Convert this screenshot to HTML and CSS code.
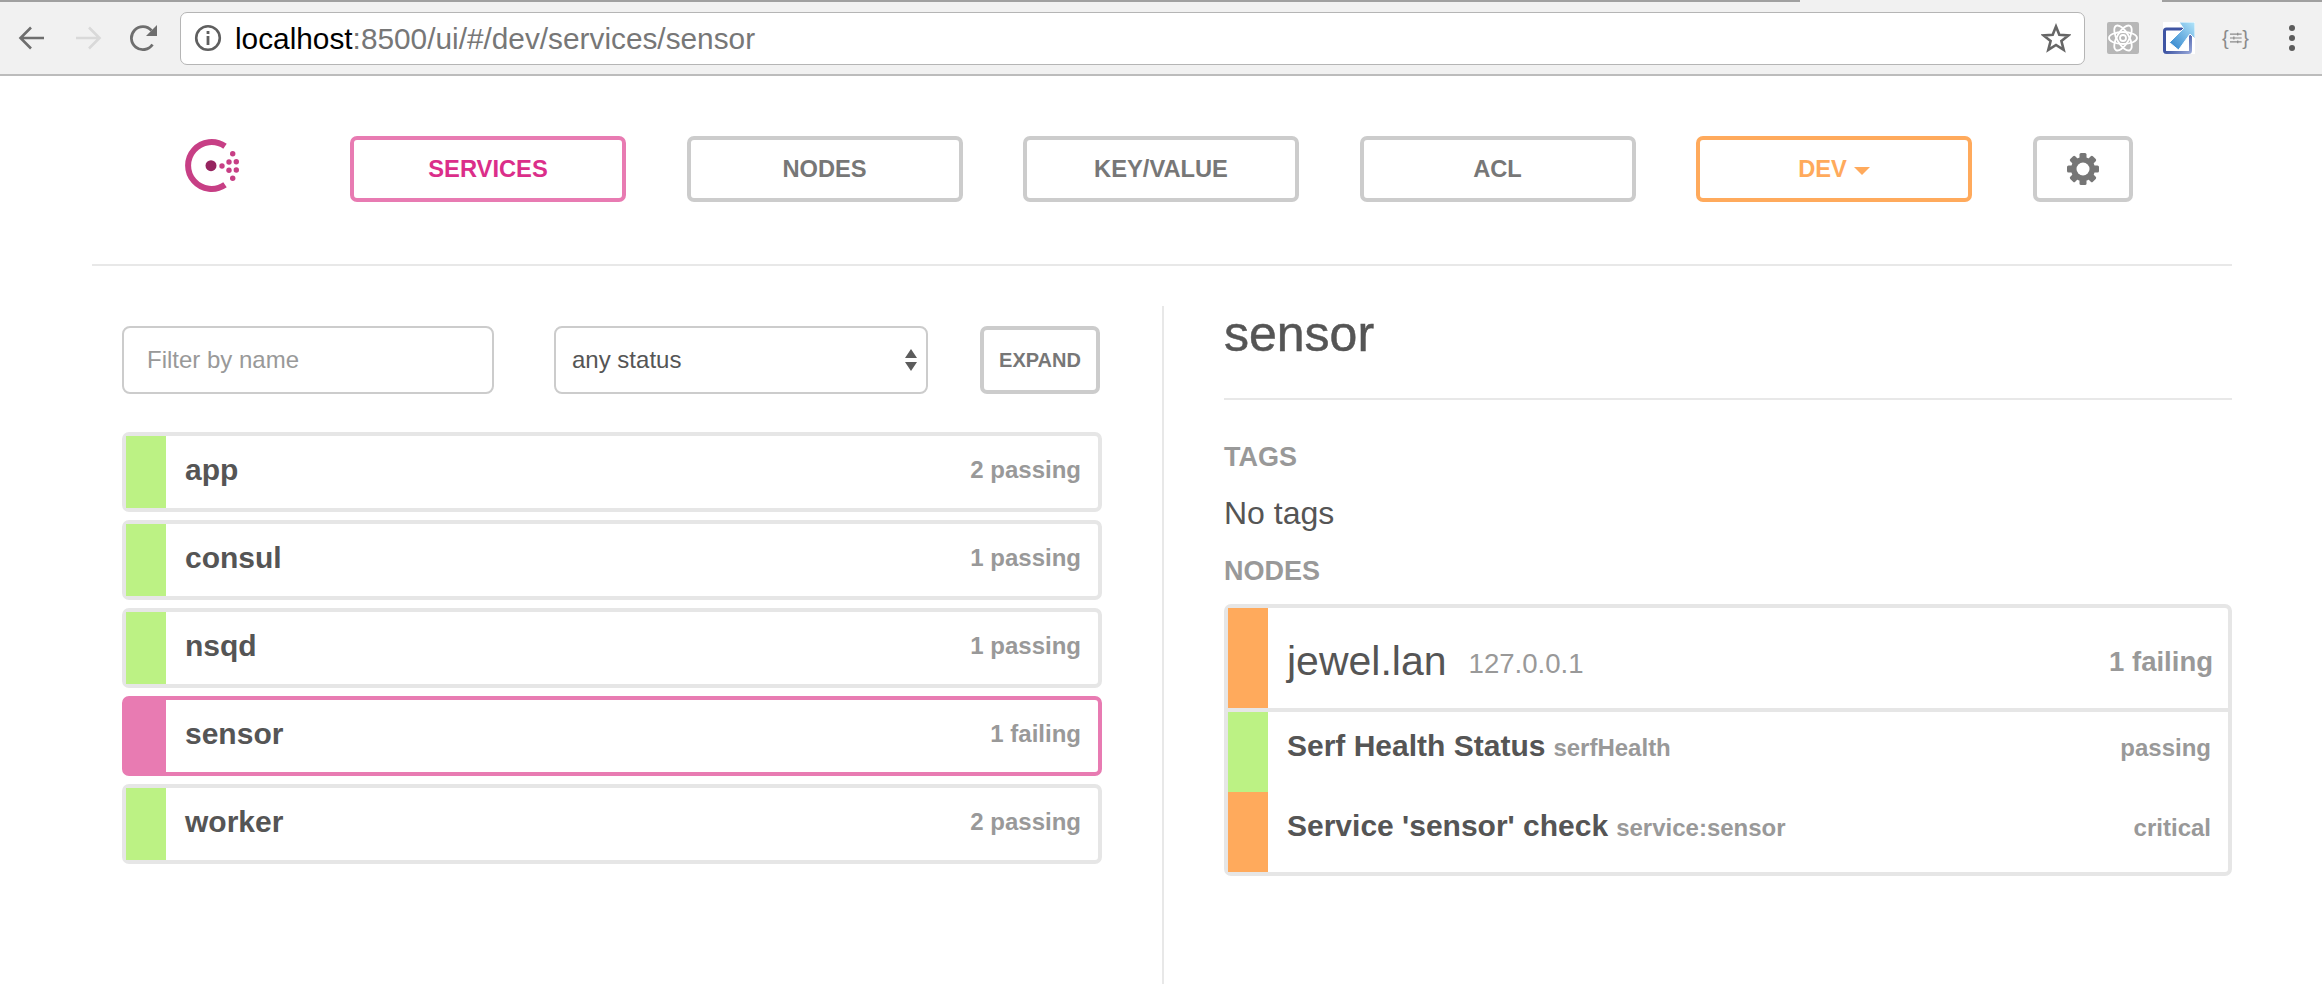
FILE: index.html
```html
<!DOCTYPE html>
<html>
<head>
    <title>Consul by HashiCorp</title>
    <link rel="stylesheet" href="styles.css">
</head>
<body>
    <div class="tab-strip">
        <div class="tab-line tab-left"></div>
        <div class="tab-line tab-right"></div>
    </div>
    <div class="browser-bar">
        <svg class="tool-icon" width="28" height="28" viewBox="0 0 28 28"><path d="M26 14H3M13 3.5 2.5 14 13 24.5" fill="none" stroke="#6e6e6e" stroke-width="2.6"/></svg>
        <svg class="tool-icon fwd" width="28" height="28" viewBox="0 0 28 28"><path d="M2 14h23M15 3.5 25.5 14 15 24.5" fill="none" stroke="#d9d9d9" stroke-width="2.6"/></svg>
        <svg class="tool-icon reload" width="28" height="28" viewBox="0 0 28 28"><path d="M22.5 20.5A11.5 11.5 0 1 1 21.5 6.5" fill="none" stroke="#6e6e6e" stroke-width="2.8"/><path d="M27 1v11H16z" fill="#6e6e6e"/></svg>
        <div class="url-box">
            <svg class="info-icon" width="28" height="28" viewBox="0 0 28 28"><circle cx="14" cy="14" r="11.8" fill="none" stroke="#5f5f5f" stroke-width="2.6"/><rect x="12.6" y="7" width="2.8" height="3" fill="#5f5f5f"/><rect x="12.6" y="12" width="2.8" height="9" fill="#5f5f5f"/></svg>
            <span class="url-text"><span class="url-host">localhost</span>:8500/ui/#/dev/services/sensor</span>
            <svg class="star-icon" width="30" height="30" viewBox="0 0 30 30"><path d="M15 3.5 18.3 11.8 27.4 12.4 20.4 18.1 22.7 26.9 15 22 7.3 26.9 9.6 18.1 2.6 12.4 11.7 11.8Z" fill="none" stroke="#666" stroke-width="2.6"/></svg>
        </div>
        <svg class="ext-icon" width="32" height="32" viewBox="0 0 32 32">
            <rect width="32" height="32" rx="2" fill="#b7b7b7"/>
            <g fill="none" stroke="#fff" stroke-width="1.8">
                <ellipse cx="16" cy="16" rx="14" ry="6"/>
                <ellipse cx="16" cy="16" rx="14" ry="6" transform="rotate(60 16 16)"/>
                <ellipse cx="16" cy="16" rx="14" ry="6" transform="rotate(120 16 16)"/>
                <circle cx="16" cy="16" r="3"/>
            </g>
        </svg>
        <svg class="ext-icon ext-blue" width="32" height="32" viewBox="0 0 32 32">
            <defs>
                <linearGradient id="frame-fill" x1="0" y1="0" x2="1" y2="1">
                    <stop offset="0.5" stop-color="#3f55a3"/>
                    <stop offset="1" stop-color="#93a3d6"/>
                </linearGradient>
                <linearGradient id="arrow-fill" x1="1" y1="0" x2="0" y2="1">
                    <stop offset="0" stop-color="#b4e6fa"/>
                    <stop offset="1" stop-color="#2a7fcb"/>
                </linearGradient>
            </defs>
            <rect width="32" height="32" fill="#fff"/>
            <rect x="1.5" y="7" width="26" height="23.5" rx="2" fill="#fff" stroke="url(#frame-fill)" stroke-width="3"/>
            <path d="M32 0V17L27 12 15.5 28 6.5 20.5 20.5 6.5 16 0Z" fill="url(#arrow-fill)" stroke="#fff" stroke-width="1"/>
        </svg>
        <span class="ext-text">{<svg width="14" height="14" viewBox="0 0 14 14"><path d="M1 3h12M1 7h12M1 11h12M9 1.5v3M5 5.5v3M9 9.5v3" fill="none" stroke="#8a8a8a" stroke-width="1.2"/></svg>}</span>
        <div class="menu-dots"><i></i><i></i><i></i></div>
    </div>

    <div class="page">
        <div class="top-nav">
            <svg class="logo" width="44" height="56" viewBox="0 0 44 56">
                <path d="M42 8.2A23.5 23.5 0 1 0 42 46.8" fill="none" stroke="#c73f85" stroke-width="6"/>
                <circle cx="28" cy="27.7" r="5.5" fill="#96245f"/>
                <g fill="#c73f85">
                    <circle cx="39" cy="28" r="2.7"/>
                    <circle cx="49.7" cy="15.7" r="2.7"/>
                    <circle cx="46" cy="24" r="2.7"/>
                    <circle cx="53.3" cy="23.7" r="2.7"/>
                    <circle cx="46" cy="32.3" r="2.7"/>
                    <circle cx="53.3" cy="32" r="2.7"/>
                    <circle cx="49.7" cy="40.3" r="2.7"/>
                </g>
            </svg>
            <a class="nav-btn active">SERVICES</a>
            <a class="nav-btn">NODES</a>
            <a class="nav-btn">KEY/VALUE</a>
            <a class="nav-btn">ACL</a>
            <a class="nav-btn dc">DEV <span class="caret"></span></a>
            <a class="nav-btn gear">
                <svg width="34" height="34" viewBox="0 0 34 34">
                    <g fill="#767676">
                        <rect x="13.5" y="1" width="7" height="32" rx="1.5"/>
                        <rect x="13.5" y="1" width="7" height="32" rx="1.5" transform="rotate(45 17 17)"/>
                        <rect x="13.5" y="1" width="7" height="32" rx="1.5" transform="rotate(90 17 17)"/>
                        <rect x="13.5" y="1" width="7" height="32" rx="1.5" transform="rotate(135 17 17)"/>
                        <circle cx="17" cy="17" r="12"/>
                    </g>
                    <circle cx="17" cy="17" r="6.5" fill="#fff"/>
                </svg>
            </a>
        </div>

        <div class="content">
            <div class="left-col">
                <div class="filters">
                    <input class="filter-input" type="text" placeholder="Filter by name">
                    <div class="status-select">
                        any status
                        <svg width="12" height="24" viewBox="0 0 12 24"><path d="M6 1 12 10H0zM6 23 0 14H12z" fill="#5c5c5c"/></svg>
                    </div>
                    <button class="expand-btn">EXPAND</button>
                </div>

                <div class="svc-row"><div class="band green"></div><h4>app</h4><span class="count">2 passing</span></div>
                <div class="svc-row"><div class="band green"></div><h4>consul</h4><span class="count">1 passing</span></div>
                <div class="svc-row"><div class="band green"></div><h4>nsqd</h4><span class="count">1 passing</span></div>
                <div class="svc-row selected"><div class="band pink"></div><h4>sensor</h4><span class="count">1 failing</span></div>
                <div class="svc-row"><div class="band green"></div><h4>worker</h4><span class="count">2 passing</span></div>
            </div>

            <div class="right-col">
                <h3 class="detail-title">sensor</h3>
                <h5 class="section-label tags-label">TAGS</h5>
                <p class="no-tags">No tags</p>
                <h5 class="section-label">NODES</h5>

                <div class="node-card">
                    <div class="node-head">
                        <div class="band orange"></div>
                        <span class="node-name">jewel.lan</span>
                        <span class="node-ip">127.0.0.1</span>
                        <span class="node-count">1 failing</span>
                    </div>
                    <div class="check-row">
                        <div class="band green"></div>
                        <span class="check-name">Serf Health Status</span>
                        <span class="check-id">serfHealth</span>
                        <span class="check-status">passing</span>
                    </div>
                    <div class="check-row">
                        <div class="band orange"></div>
                        <span class="check-name">Service 'sensor' check</span>
                        <span class="check-id">service:sensor</span>
                        <span class="check-status">critical</span>
                    </div>
                </div>
            </div>
        </div>
    </div>
</body>
</html>
```

FILE: styles.css
```css
* {
    box-sizing: border-box;
}

body {
    margin: 0;
    min-height: 100vh;
    display: flex;
    flex-direction: column;
    font-family: "Liberation Sans", Arial, sans-serif;
    color: #555;
    background: #fff;
    overflow: hidden;
}

/* browser toolbar */
.tab-strip {
    height: 2px;
    display: flex;
    justify-content: space-between;
    background: #f1f1f1;
}

.tab-line {
    background: #a0a0a0;
}

.tab-left {
    width: 1800px;
}

.tab-right {
    width: 160px;
}

.browser-bar {
    height: 74px;
    display: flex;
    align-items: center;
    padding: 0 0 0 18px;
    background: #f1f1f1;
    border-bottom: 2px solid #bcbcbc;
}

.tool-icon {
    flex: none;
    margin-right: 28px;
}

.tool-icon.reload {
    margin-right: 22px;
}

.url-box {
    width: 1905px;
    height: 53px;
    display: flex;
    align-items: center;
    padding: 0 13px 0 13px;
    background: #fff;
    border: 1px solid #b5b5b5;
    border-radius: 7px;
}

.url-text {
    margin-left: 13px;
    padding-top: 1px;
    font-size: 29.8px;
    color: #777;
    flex: 1;
}

.url-host {
    color: #000;
}

.ext-icon {
    flex: none;
    margin-left: 22px;
}

.ext-icon.ext-blue {
    margin-left: 24px;
}

.ext-text {
    margin-left: 27px;
    width: 27px;
    display: flex;
    align-items: center;
    justify-content: space-between;
    font-size: 20px;
    color: #8a8a8a;
}

.menu-dots {
    margin-left: 40px;
    display: flex;
    flex-direction: column;
    gap: 4px;
}

.menu-dots i {
    width: 6px;
    height: 6px;
    border-radius: 50%;
    background: #5c5c5c;
}

/* page */
.page {
    flex: 1;
    display: flex;
    flex-direction: column;
    margin: 0 90px 0 92px;
}

.top-nav {
    height: 190px;
    display: flex;
    align-items: flex-start;
    padding-top: 60px;
    border-bottom: 2px solid #e8e8e8;
}

.logo {
    flex: none;
    margin: 2px 0 0 91px;
    overflow: visible;
}

.nav-btn {
    flex: none;
    width: 276px;
    height: 66px;
    margin-left: 60.5px;
    display: flex;
    align-items: center;
    justify-content: center;
    gap: 7px;
    font-size: 23.7px;
    font-weight: bold;
    color: #777;
    border: 4px solid #ccc;
    border-radius: 7px;
}

.nav-btn.active {
    margin-left: 123px;
    color: #db2e8a;
    border-color: #e87bb2;
}

.nav-btn.dc {
    color: #ffaa5c;
    border-color: #ffaa5c;
}

.nav-btn.gear {
    width: 100px;
}

.caret {
    width: 0;
    height: 0;
    border-left: 8px solid transparent;
    border-right: 8px solid transparent;
    border-top: 8px solid #ffaa5c;
    margin-top: 3px;
}

.content {
    flex: 1;
    display: flex;
}

.left-col {
    width: 1070px;
    padding: 60px 60px 0 30px;
}

.filters {
    display: flex;
    align-items: stretch;
    height: 68px;
    margin-bottom: 38px;
}

.filter-input {
    width: 372px;
    padding: 0 23px;
    font-family: inherit;
    font-size: 24px;
    color: #555;
    border: 2px solid #ccc;
    border-radius: 8px;
    outline: none;
}

.filter-input::placeholder {
    color: #999;
}

.status-select {
    width: 374px;
    margin-left: 60px;
    display: flex;
    align-items: center;
    justify-content: space-between;
    padding: 0 9px 0 16px;
    font-size: 24px;
    color: #555;
    border: 2px solid #ccc;
    border-radius: 8px;
}

.expand-btn {
    width: 120px;
    margin-left: 52px;
    padding: 0;
    font-family: inherit;
    font-size: 20px;
    font-weight: bold;
    color: #777;
    background: #fff;
    border: 4px solid #ccc;
    border-radius: 7px;
}

.svc-row {
    height: 80px;
    margin-bottom: 8px;
    display: flex;
    align-items: center;
    border: 4px solid #e6e6e6;
    border-radius: 7px;
}

.svc-row.selected {
    border-color: #e87bb2;
}

.band {
    flex: none;
    width: 40px;
    align-self: stretch;
}

.green {
    background: #bcf284;
}

.orange {
    background: #ffaa5c;
}

.pink {
    background: #e87bb2;
}

.svc-row h4 {
    flex: 1;
    margin: 0 0 4px 19px;
    font-size: 30px;
    font-weight: bold;
    color: #555;
}

.count {
    margin: 0 17px 4px 0;
    font-size: 24px;
    font-weight: bold;
    color: #999;
}

.right-col {
    flex: 1;
    margin-top: 40px;
    padding-left: 60px;
    border-left: 2px solid #e8e8e8;
}

.detail-title {
    margin: 0;
    height: 94px;
    font-size: 50px;
    font-weight: normal;
    line-height: 56px;
    color: #555;
    -webkit-text-stroke: 0.5px #555;
    border-bottom: 2px solid #e8e8e8;
}

.section-label {
    margin: 0;
    font-size: 27px;
    font-weight: bold;
    line-height: 30px;
    color: #999;
}

.tags-label {
    margin-top: 42px;
}

.no-tags {
    margin: 23px 0 25px;
    font-size: 32px;
    line-height: 36px;
}

.node-card {
    margin-top: 18px;
    border: 4px solid #e6e6e6;
    border-radius: 7px;
}

.node-head {
    height: 104px;
    display: flex;
    align-items: center;
    border-bottom: 4px solid #e6e6e6;
}

.node-name {
    margin: 6px 0 0 19px;
    font-size: 41px;
    color: #555;
}

.node-ip {
    margin: 12px 0 0 22px;
    font-size: 27.6px;
    color: #999;
}

.node-count {
    margin: 8px 15px 0 auto;
    font-size: 27.5px;
    font-weight: bold;
    color: #999;
}

.check-row {
    height: 80px;
    display: flex;
    align-items: baseline;
}

.check-row .band {
    height: 80px;
}

.check-name {
    margin-left: 19px;
    padding-top: 17px;
    font-size: 30px;
    font-weight: bold;
    color: #555;
}

.check-id {
    margin-left: 8px;
    font-size: 24px;
    font-weight: bold;
    color: #999;
}

.check-status {
    margin: 0 17px 0 auto;
    font-size: 24px;
    font-weight: bold;
    color: #999;
}
```
